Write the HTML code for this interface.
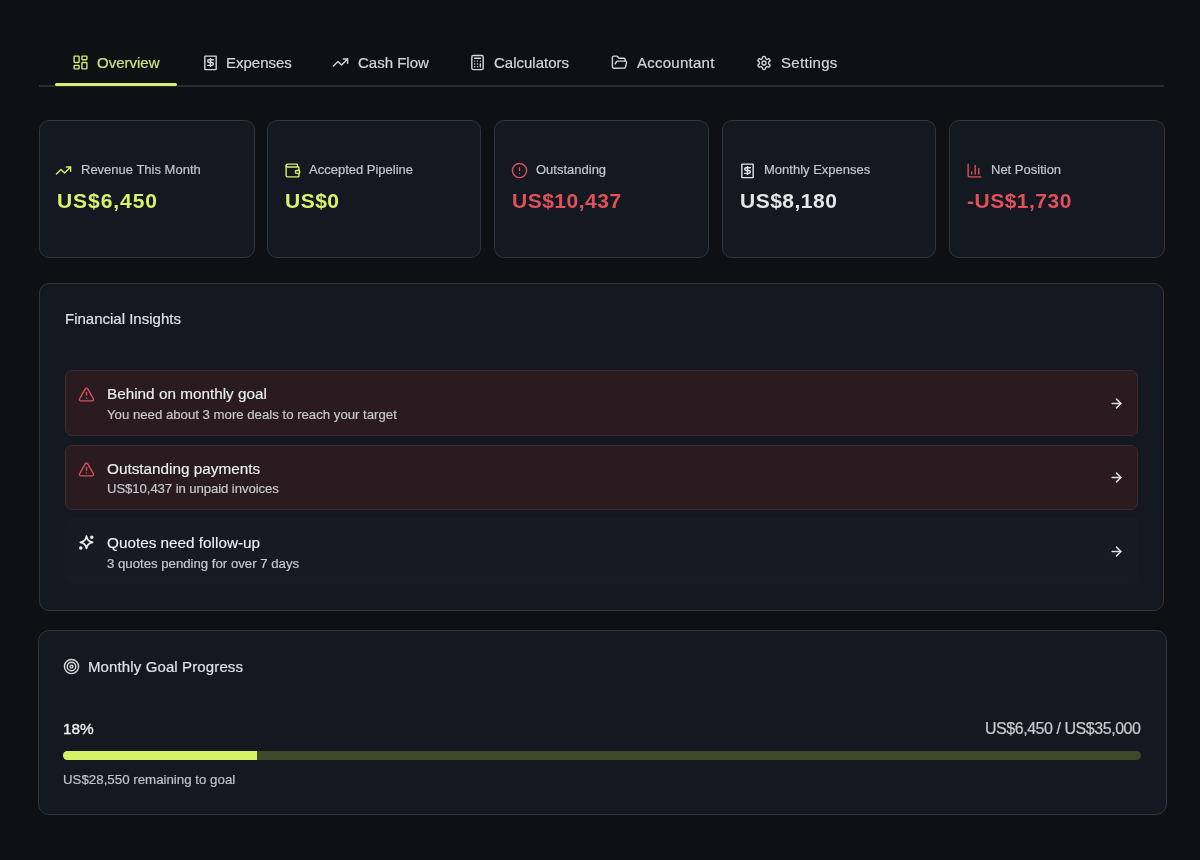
<!DOCTYPE html>
<html><head><meta charset="utf-8">
<style>
*{box-sizing:border-box;margin:0;padding:0}
html,body{width:1200px;height:860px;overflow:hidden;background:#0f1014;font-family:"Liberation Sans",sans-serif;}
.abs{position:absolute}
svg.i{position:absolute;fill:none;stroke:currentColor;stroke-width:2;stroke-linecap:round;stroke-linejoin:round}
.t{position:absolute;white-space:nowrap;line-height:20px;-webkit-text-stroke:0.2px currentColor}
.tab{font-size:15px;color:#d4d6dc}
.navline{position:absolute;left:39px;top:85px;width:1125px;height:2px;background:#2a2b34}
.ul{position:absolute;left:55px;top:83px;width:122px;height:3px;background:#d6ee74;border-radius:2px}
.card{position:absolute;top:120px;width:215px;height:138px;background:#141821;border:1px solid #31353f;border-radius:10px}
.lbl{font-size:13px;color:#c3c6cd}
.val{font-size:21px;font-weight:700;letter-spacing:0.5px;-webkit-text-stroke:0}
.panel{position:absolute;background:#141821;border:1px solid #31353f;border-radius:10px}
.alert{position:absolute;left:65px;width:1073px;height:66px;border-radius:7px}
.red{background:#2a1b21;border:1px solid #40292f}
.plain{background:#161a22;border:1px solid #181c24}
.at{font-size:15.3px;color:#eeeff1;-webkit-text-stroke:0.15px #eeeff1}
.as{font-size:13.2px;color:#c5c7cc}
</style></head><body>
<div id="root" style="position:absolute;left:0;top:0;width:1200px;height:860px;will-change:transform">

<!-- tabs -->
<div class="navline"></div>
<div class="ul"></div>
<svg class="i" style="left:72px;top:54px;color:#d2ea72" width="17" height="17" viewBox="0 0 24 24"><rect width="7" height="9" x="3" y="3" rx="1"/><rect width="7" height="5" x="14" y="3" rx="1"/><rect width="7" height="9" x="14" y="12" rx="1"/><rect width="7" height="5" x="3" y="16" rx="1"/></svg>
<div class="t tab" style="left:97px;top:53px;color:#cfe47e">Overview</div>

<svg class="i" style="left:202px;top:54px;color:#d4d6dc" width="17" height="17" viewBox="0 0 24 24"><rect x="4" y="3" width="16" height="19" rx="0.5"/><path d="M16 8h-6a2 2 0 1 0 0 4h4a2 2 0 1 1 0 4H8"/><path d="M12 17.5v-11"/></svg>
<div class="t tab" style="left:226px;top:53px">Expenses</div>

<svg class="i" style="left:332px;top:54px;color:#d4d6dc" width="17" height="17" viewBox="0 0 24 24"><polyline points="22 7 13.5 15.5 8.5 10.5 2 17"/><polyline points="16 7 22 7 22 13"/></svg>
<div class="t tab" style="left:358px;top:53px">Cash Flow</div>

<svg class="i" style="left:469px;top:54px;color:#d4d6dc" width="17" height="17" viewBox="0 0 24 24"><rect width="16" height="20" x="4" y="2" rx="2"/><line x1="8" x2="16" y1="6" y2="6"/><line x1="16" x2="16" y1="14" y2="18"/><path d="M16 10h.01"/><path d="M12 10h.01"/><path d="M8 10h.01"/><path d="M12 14h.01"/><path d="M8 14h.01"/><path d="M12 18h.01"/><path d="M8 18h.01"/></svg>
<div class="t tab" style="left:494px;top:53px">Calculators</div>

<svg class="i" style="left:611px;top:54px;color:#d4d6dc" width="17" height="17" viewBox="0 0 24 24"><path d="m6 14 1.5-2.9A2 2 0 0 1 9.24 10H20a2 2 0 0 1 1.94 2.5l-1.540 6a2 2 0 0 1-1.95 1.5H4a2 2 0 0 1-2-2V5a2 2 0 0 1 2-2h3.9a2 2 0 0 1 1.69.9l.81 1.2a2 2 0 0 0 1.67.9H18a2 2 0 0 1 2 2v2"/></svg>
<div class="t tab" style="left:637px;top:53px;letter-spacing:0.25px">Accountant</div>

<svg class="i" style="left:756px;top:55px;color:#d4d6dc" width="16" height="16" viewBox="0 0 24 24"><path d="M12.22 2h-.44a2 2 0 0 0-2 2v.18a2 2 0 0 1-1 1.730l-.43.25a2 2 0 0 1-2 0l-.15-.08a2 2 0 0 0-2.73.73l-.22.38a2 2 0 0 0 .73 2.73l.15.1a2 2 0 0 1 1 1.72v.51a2 2 0 0 1-1 1.74l-.15.09a2 2 0 0 0-.73 2.730l.22.38a2 2 0 0 0 2.73.73l.15-.08a2 2 0 0 1 2 0l.43.25a2 2 0 0 1 1 1.73V20a2 2 0 0 0 2 2h.44a2 2 0 0 0 2-2v-.18a2 2 0 0 1 1-1.73l.43-.25a2 2 0 0 1 2 0l.15.08a2 2 0 0 0 2.73-.73l.22-.39a2 2 0 0 0-.73-2.73l-.15-.08a2 2 0 0 1-1-1.74v-.5a2 2 0 0 1 1-1.74l.15-.09a2 2 0 0 0 .73-2.73l-.22-.38a2 2 0 0 0-2.73-.73l-.15.08a2 2 0 0 1-2 0l-.43-.25a2 2 0 0 1-1-1.73V4a2 2 0 0 0-2-2z"/><circle cx="12" cy="12" r="3"/></svg>
<div class="t tab" style="left:781px;top:53px;letter-spacing:0.3px">Settings</div>

<!-- stat cards -->
<div class="card" style="left:39px;width:216px"></div>
<div class="card" style="left:267px;width:214px"></div>
<div class="card" style="left:494px;width:215px"></div>
<div class="card" style="left:722px;width:214px"></div>
<div class="card" style="left:949px;width:216px"></div>

<svg class="i" style="left:55px;top:162px;color:#d4f16c" width="17" height="17" viewBox="0 0 24 24"><polyline points="22 7 13.5 15.5 8.5 10.5 2 17"/><polyline points="16 7 22 7 22 13"/></svg>
<div class="t lbl" style="left:81px;top:160px">Revenue This Month</div>
<div class="t val" style="left:57px;top:191px;color:#d6f46c;letter-spacing:0.95px">US$6,450</div>

<svg class="i" style="left:284px;top:162px;color:#d4f16c" width="17" height="17" viewBox="0 0 24 24"><path d="M19 7V4a1 1 0 0 0-1-1H5a2 2 0 0 0 0 4h15a1 1 0 0 1 1 1v4h-3a2 2 0 0 0 0 4h3a1 1 0 0 0 1-1v-2a1 1 0 0 0-1-1"/><path d="M3 5v14a2 2 0 0 0 2 2h15a1 1 0 0 0 1-1v-4"/></svg>
<div class="t lbl" style="left:309px;top:160px">Accepted Pipeline</div>
<div class="t val" style="left:285px;top:191px;color:#d6f46c">US$0</div>

<svg class="i" style="left:511px;top:162px;color:#dc4f58" width="17" height="17" viewBox="0 0 24 24"><circle cx="12" cy="12" r="10"/><line x1="12" x2="12" y1="8" y2="12"/><line x1="12" x2="12.01" y1="16" y2="16"/></svg>
<div class="t lbl" style="left:536px;top:160px">Outstanding</div>
<div class="t val" style="left:512px;top:191px;color:#e2515a">US$10,437</div>

<svg class="i" style="left:739px;top:162px;color:#e2e4e8" width="17" height="17" viewBox="0 0 24 24"><rect x="4" y="3" width="16" height="19" rx="0.5"/><path d="M16 8h-6a2 2 0 1 0 0 4h4a2 2 0 1 1 0 4H8"/><path d="M12 17.5v-11"/></svg>
<div class="t lbl" style="left:764px;top:160px">Monthly Expenses</div>
<div class="t val" style="left:740px;top:191px;color:#e4e6ea">US$8,180</div>

<svg class="i" style="left:966px;top:162px;color:#dc4f58" width="17" height="17" viewBox="0 0 24 24"><path d="M3 3v16a2 2 0 0 0 2 2h16"/><path d="M18 17V9"/><path d="M13 17V5"/><path d="M8 17v-3"/></svg>
<div class="t lbl" style="left:991px;top:160px">Net Position</div>
<div class="t val" style="left:967px;top:191px;color:#e2515a">-US$1,730</div>

<!-- insights -->
<div class="panel" style="left:39px;top:283px;width:1125px;height:328px"></div>
<div class="t" style="left:65px;top:309px;font-size:15px;color:#dfe1e5">Financial Insights</div>

<div class="alert red" style="top:370px"></div>
<svg class="i" style="left:78px;top:386px;color:#dc4f58" width="17" height="17" viewBox="0 0 24 24"><path d="m21.73 18-8-14a2 2 0 0 0-3.48 0l-8 14A2 2 0 0 0 4 21h16a2 2 0 0 0 1.73-3"/><path d="M12 9v4"/><path d="M12 17h.01"/></svg>
<div class="t at" style="left:107px;top:384px">Behind on monthly goal</div>
<div class="t as" style="left:107px;top:405px">You need about 3 more deals to reach your target</div>
<svg class="i" style="left:1109px;top:396px;color:#dcdde1;stroke-width:2.4" width="15" height="15" viewBox="0 0 24 24"><path d="M5 12h14"/><path d="m12 5 7 7-7 7"/></svg>

<div class="alert red" style="top:445px;height:65px"></div>
<svg class="i" style="left:78px;top:461px;color:#dc4f58" width="17" height="17" viewBox="0 0 24 24"><path d="m21.73 18-8-14a2 2 0 0 0-3.48 0l-8 14A2 2 0 0 0 4 21h16a2 2 0 0 0 1.73-3"/><path d="M12 9v4"/><path d="M12 17h.01"/></svg>
<div class="t at" style="left:107px;top:459px">Outstanding payments</div>
<div class="t as" style="left:107px;top:479px;letter-spacing:-0.1px">US$10,437 in unpaid invoices</div>
<svg class="i" style="left:1109px;top:470px;color:#dcdde1;stroke-width:2.4" width="15" height="15" viewBox="0 0 24 24"><path d="M5 12h14"/><path d="m12 5 7 7-7 7"/></svg>

<div class="alert plain" style="top:518px"></div>
<svg class="i" style="left:70px;top:528px;color:#eeeff1;stroke-width:1.7" width="30" height="28" viewBox="0 0 30 28"><path d="M16.5 8.2Q17.3 13.5 22.6 14.3Q17.3 15.1 16.5 20.4Q15.7 15.1 10.4 14.3Q15.7 13.5 16.5 8.2Z"/><circle cx="21.8" cy="9.2" r="0.9" fill="currentColor"/><circle cx="10.8" cy="19.9" r="0.9" fill="currentColor"/></svg>
<div class="t at" style="left:107px;top:533px">Quotes need follow-up</div>
<div class="t as" style="left:107px;top:554px">3 quotes pending for over 7 days</div>
<svg class="i" style="left:1109px;top:544px;color:#dcdde1;stroke-width:2.4" width="15" height="15" viewBox="0 0 24 24"><path d="M5 12h14"/><path d="m12 5 7 7-7 7"/></svg>

<!-- goal -->
<div class="panel" style="left:38px;top:630px;width:1129px;height:185px;border-radius:11px"></div>
<svg class="i" style="left:63px;top:658px;color:#d8d9dd" width="17" height="17" viewBox="0 0 24 24"><circle cx="12" cy="12" r="10"/><circle cx="12" cy="12" r="6"/><circle cx="12" cy="12" r="2"/></svg>
<div class="t" style="left:88px;top:657px;font-size:15px;letter-spacing:0.12px;color:#dfe1e5">Monthly Goal Progress</div>
<div class="t" style="left:63px;top:719px;font-size:15.4px;letter-spacing:-0.1px;-webkit-text-stroke:0.35px currentColor;color:#eeeff1">18%</div>
<div class="t" style="left:900px;width:240.5px;text-align:right;top:719px;font-size:16px;letter-spacing:-0.45px;color:#c9cbd0">US$6,450 / US$35,000</div>
<div class="abs" style="left:63px;top:751px;width:1078px;height:9px;border-radius:4.5px;background:#3d4a2a"></div>
<div class="abs" style="left:63px;top:751px;width:194px;height:9px;border-radius:4.5px 0 0 4.5px;background:#d3f266"></div>
<div class="t" style="left:63px;top:770px;font-size:13.3px;color:#bfc2c8">US$28,550 remaining to goal</div>

</div>
</body></html>
